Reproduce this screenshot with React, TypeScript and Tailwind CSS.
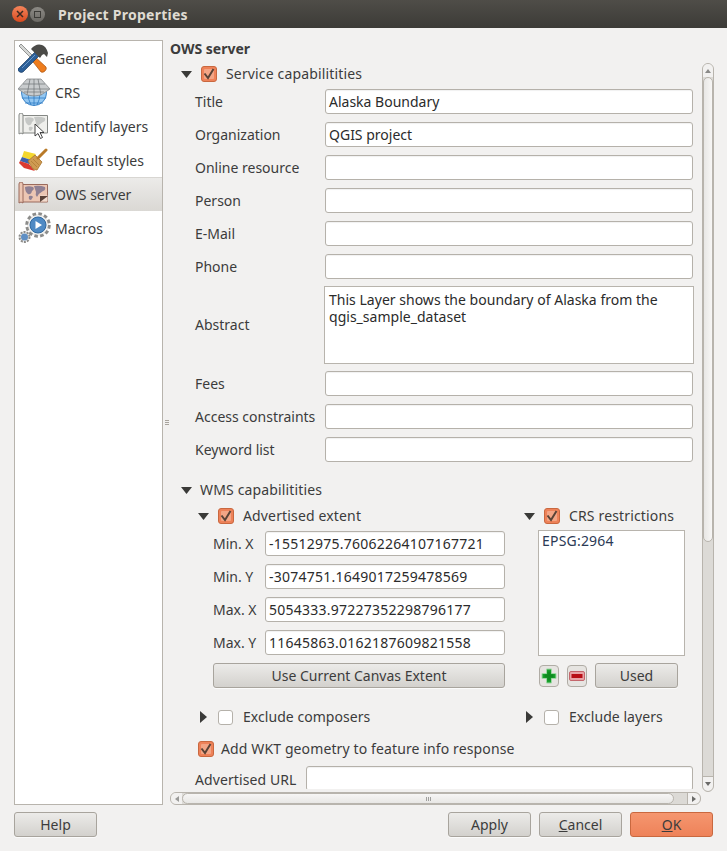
import type { ReactNode } from 'react';

const inputCls = 'h-[25px] rounded-[3px] border border-[#b5b1aa] bg-white px-[3px] text-[14px] leading-[23px] text-[#2b2b2b] shadow-[inset_0_1px_1px_rgba(0,0,0,0.06)]';
const btnCls = 'flex h-[25px] items-center justify-center rounded-[3px] border border-[#a8a49d] bg-gradient-to-b from-[#ecebe9] to-[#d3d1cd] text-[14px] text-[#3c3c3c] shadow-[0_1px_0_rgba(255,255,255,0.7)]';

function Triangle({ dir = 'down' }: { dir?: 'down' | 'right' }) {
  return (
    <svg width="11" height="12" viewBox="0 0 11 12" className="shrink-0">
      {dir === 'down' ? <path d="M0 3h11L5.500 10z" fill="#3a3a38" /> : <path d="M2 0v12l7-6z" fill="#3a3a38" />}
    </svg>
  );
}

function Check({ checked = true }: { checked?: boolean }) {
  if (!checked) {
    return <div className="mr-[1px] h-[15px] w-[15px] shrink-0 rounded-[3px] border border-[#b5b1aa] bg-white" />;
  }
  return (
    <svg width="16" height="16" viewBox="0 0 16 16" className="shrink-0">
      <rect x="0.500" y="0.500" width="15" height="15" rx="2.500" fill="#ee8259" stroke="#c9683f" />
      <rect x="3" y="3" width="10" height="10" rx="1" fill="#f3a585" />
      <path d="M3.500 7.500l3.500 4.500 5.500-9" fill="none" stroke="#5a4336" strokeWidth="2" />
    </svg>
  );
}

// labels sit a pixel higher next to checkboxes than the font's own centre
function RowLabel({ children }: { children: ReactNode }) {
  return <span className="-mt-[2px] whitespace-nowrap tracking-[0.15px]">{children}</span>;
}

function GeneralIcon() {
  return (
    <svg width="30" height="30" viewBox="0 0 30 30">
      <path d="M1 3l2-2 12 12-2 2z" fill="#d4d6d4" stroke="#6f6f6f" strokeWidth="0.7" />
      <path d="M12 15l3-3 13 12q1 2-1 4t-4 1z" fill="#ee7d1e" stroke="#a8500c" strokeWidth="0.7" />
      <path d="M0 26L17 9l4 4L5 29q-2 1-4-.5t-1-2.500z" fill="#2c5f98" stroke="#1c3d63" strokeWidth="0.7" />
      <path d="M4 25L17 12" stroke="#6f9bc9" strokeWidth="1" />
      <path d="M13 6q5-6 11-4 4 1 6 8l-1 4-3-3-2 1-2 3-5-5-1-1z" fill="#4b4b48" />
    </svg>
  );
}

function CrsIcon() {
  return (
    <svg width="32" height="28" viewBox="0 0 32 28">
      <circle cx="16" cy="15" r="12.500" fill="#93c7f2" stroke="#3f86c9" />
      <path d="M16 14v14M4 20h24M7 25h18M10 14q0 8 3 13M22 14q0 8-3 13" stroke="#2f7cc4" strokeWidth="0.8" fill="none" />
      <path d="M0 11L9 1h14l9 10-9 6-7 1-7-1z" fill="#c9ccce" stroke="#85898c" strokeWidth="0.8" />
      <path d="M16 1v17M12 1L9 17M20 1l3 16M5 6h22M1 11h30M6 14h20" stroke="#6f7376" strokeWidth="0.7" fill="none" />
    </svg>
  );
}

function MapIcon({ active = false, cursor = false }: { active?: boolean; cursor?: boolean }) {
  const stroke = active ? '#9a6a5c' : '#858885';
  const paper = active ? '#ecc6b3' : '#efefec';
  const land = active ? '#8f8093' : '#c6c8c6';
  return (
    <svg width="32" height="26" viewBox="0 0 32 26">
      <path d="M4 2.500h25.500v17.500H4z" fill={paper} stroke={stroke} />
      <path d="M1 2q0-2 2-2t2 2v19q-2-2-4 0z" fill={paper} stroke={stroke} />
      <path d="M7 5q4-1.500 8 0 2 2-1 4-1 4-4 3-3-2-3-7z" fill={land} />
      <path d="M16 4q6-1 11 1 1 3-2 4-4 2-6 6-2-2-1-5z" fill={land} />
      <path d="M11 14q3-1 4 1l-2 3q-3 0-2-4z" fill={land} />
      {active && <path d="M22.500 19.500v-6l7 0v6z" fill="#f3dccf" />}
      {active && <path d="M22 20v-6h8z" fill="#5b4238" />}
      {cursor && <path d="M17 11v12l3-2.500 2.500 5 2-1-2.500-5h4z" fill="#fff" stroke="#333" strokeWidth="0.9" />}
    </svg>
  );
}

function BrushIcon() {
  return (
    <svg width="30" height="26" viewBox="0 0 30 26">
      <path d="M6 4l12 3-5 6-9-3z" fill="#f4d72f" />
      <path d="M4 10l9 3-2 4-9-3z" fill="#3d62ad" />
      <path d="M2 14l9 3 6 7-11-3-5-5z" fill="#dc3a30" />
      <path d="M10 14l7-6 7 7-5 8-4-1z" fill="#cf9b52" stroke="#a6722c" strokeWidth="0.8" />
      <path d="M13 14l6 6M15 12l6 6" stroke="#a6722c" strokeWidth="0.6" />
      <path d="M20 11l8-8" stroke="#b97a28" strokeWidth="3" strokeLinecap="round" />
    </svg>
  );
}

function MacrosIcon() {
  return (
    <svg width="33" height="32" viewBox="0 0 33 32">
      <circle cx="20" cy="13" r="11" fill="#ecebe9" stroke="#8c8c8a" strokeWidth="3.500" strokeDasharray="3.500 2.260" />
      <circle cx="20" cy="13" r="10" fill="#f1f0ee" />
      <circle cx="20" cy="13" r="8" fill="#4f8ac4" stroke="#2f689f" />
      <path d="M17.500 9v8l6.500-4z" fill="#fff" />
      <circle cx="6.500" cy="25" r="5" fill="#ecebe9" stroke="#8c8c8a" strokeWidth="2" strokeDasharray="2 1.140" />
      <circle cx="6.500" cy="25" r="3.500" fill="#5f8fc4" />
    </svg>
  );
}

const navItems: { label: string; icon: ReactNode; active?: boolean }[] = [
  { label: 'General', icon: <GeneralIcon /> },
  { label: 'CRS', icon: <CrsIcon /> },
  { label: 'Identify layers', icon: <MapIcon cursor /> },
  { label: 'Default styles', icon: <BrushIcon /> },
  { label: 'OWS server', icon: <MapIcon active />, active: true },
  { label: 'Macros', icon: <MacrosIcon /> },
];

function Sidebar() {
  return (
    <div className="w-[149px] shrink-0 border border-[#b8b4ad] bg-white">
      {navItems.map((item) => (
        <div
          key={item.label}
          className={
            item.active
              ? 'flex h-[34px] items-center border-t border-[#d8d6d2] bg-gradient-to-b from-[#ecebe9] to-[#dad8d4]'
              : 'flex h-[34px] items-center'
          }
        >
          <div className="flex w-[40px] shrink-0 items-center justify-start pl-[3px]">{item.icon}</div>
          <span className="text-[14px] text-[#3c3c3c]">{item.label}</span>
        </div>
      ))}
    </div>
  );
}

function FormRow({ label, value }: { label: string; value?: string }) {
  return (
    <div className="flex h-[25px] items-center">
      <span className="w-[130px] shrink-0 text-[14px] text-[#3c3c3c]">{label}</span>
      <div className={`${inputCls} w-[368px]`}>{value}</div>
    </div>
  );
}

function ExtentRow({ label, value }: { label: string; value: string }) {
  return (
    <div className="flex h-[25px] items-center">
      <span className="w-[52px] shrink-0 text-[14px] text-[#3c3c3c]">{label}</span>
      <div className={`${inputCls} w-[240px] whitespace-nowrap tracking-[0.24px]`}>{value}</div>
    </div>
  );
}

function VerticalScrollbar() {
  return (
    <div className="flex h-[729px] w-[12px] shrink-0 flex-col overflow-hidden rounded-[6px] border border-[#b8b4ad] bg-[#dcdad6]">
      <div className="flex h-[13px] shrink-0 items-center justify-center bg-[#f2f1f0]">
        <svg width="6" height="4" viewBox="0 0 6 4"><path d="M0 4h6L3 0z" fill="#8a8a88" /></svg>
      </div>
      <div className="h-[465px] shrink-0 rounded-[6px] border border-[#b8b4ad] bg-gradient-to-r from-[#e8e7e5] to-[#f7f6f5]" />
      <div className="flex-1" />
      <div className="flex h-[15px] shrink-0 items-center justify-center rounded-b-[6px] border-t border-[#b8b4ad] bg-[#f2f1f0]">
        <svg width="6" height="4" viewBox="0 0 6 4"><path d="M0 0h6L3 4z" fill="#6a6a68" /></svg>
      </div>
    </div>
  );
}

function HorizontalScrollbar() {
  return (
    <div className="flex h-[13px] w-[531px] shrink-0 overflow-hidden rounded-[6px] border border-[#b8b4ad] bg-[#dcdad6]">
      <div className="flex w-[11px] shrink-0 items-center justify-center bg-[#f2f1f0]">
        <svg width="4" height="6" viewBox="0 0 4 6"><path d="M4 0v6L0 3z" fill="#9a9a98" /></svg>
      </div>
      <div className="flex w-[492px] shrink-0 items-center justify-center gap-[1px] rounded-[6px] border border-[#b8b4ad] bg-gradient-to-b from-[#f7f6f5] to-[#e8e7e5]">
        <span className="h-[4px] w-px bg-[#a0a09e]" />
        <span className="h-[4px] w-px bg-[#a0a09e]" />
        <span className="h-[4px] w-px bg-[#a0a09e]" />
      </div>
      <div className="flex-1" />
      <div className="flex w-[13px] shrink-0 items-center justify-center rounded-r-[6px] border-l border-[#b8b4ad] bg-[#f2f1f0]">
        <svg width="4" height="6" viewBox="0 0 4 6"><path d="M0 0v6l4-3z" fill="#6a6a68" /></svg>
      </div>
    </div>
  );
}

function ScrollContent() {
  return (
    <div className="mr-[1px] h-[726px] w-[531px] shrink-0 overflow-hidden text-[14px] text-[#3c3c3c]">
      <div className="flex h-[22px] items-center gap-[9px] pl-[11px]">
        <Triangle />
        <Check />
        <RowLabel>Service capabilitities</RowLabel>
      </div>

      <div className="mt-[4px] flex flex-col gap-[8px] pl-[25px]">
        <FormRow label="Title" value="Alaska Boundary" />
        <FormRow label="Organization" value="QGIS project" />
        <FormRow label="Online resource" />
        <FormRow label="Person" />
        <FormRow label="E-Mail" />
        <FormRow label="Phone" />
      </div>
      <div className="mt-[7px] flex h-[78px] items-center pl-[25px]">
        <span className="-mt-[2px] w-[129px] shrink-0">Abstract</span>
        <div className="h-[78px] w-[370px] border border-[#b8b4ad] bg-white px-[4px] pt-[4px] leading-[17px] tracking-[0.02px] text-[#2b2b2b]">
          This Layer shows the boundary of Alaska from the qgis_sample_dataset
        </div>
      </div>
      <div className="mt-[7px] flex flex-col gap-[8px] pl-[25px]">
        <FormRow label="Fees" />
        <FormRow label="Access constraints" />
        <FormRow label="Keyword list" />
      </div>

      <div className="mt-[17px] flex h-[22px] items-center gap-[8px] pl-[11px]">
        <Triangle />
        <RowLabel>WMS capabilitities</RowLabel>
      </div>

      <div className="mt-[4px] flex">
        <div className="w-[335px] shrink-0 pl-[28px]">
          <div className="flex h-[22px] items-center gap-[9px]">
            <Triangle />
            <Check />
            <RowLabel>Advertised extent</RowLabel>
          </div>
          <div className="ml-[15px] mt-[4px] flex flex-col gap-[8px]">
            <ExtentRow label="Min. X" value="-15512975.76062264107167721" />
            <ExtentRow label="Min. Y" value="-3074751.1649017259478569" />
            <ExtentRow label="Max. X" value="5054333.97227352298796177" />
            <ExtentRow label="Max. Y" value="11645863.0162187609821558" />
            <div className={`${btnCls} w-[292px]`}>Use Current Canvas Extent</div>
          </div>
        </div>
        <div className="w-[190px] shrink-0 pl-[19px]">
          <div className="flex h-[22px] items-center gap-[9px]">
            <Triangle />
            <Check />
            <RowLabel>CRS restrictions</RowLabel>
          </div>
          <div className="ml-[14px] mt-[3px] h-[126px] w-[147px] border border-[#b8b4ad] bg-white px-[3px] leading-[19px] tracking-[0.2px] text-[#2b3a55]">EPSG:2964</div>
          <div className="ml-[15px] mt-[7px] flex h-[25px] items-center">
            <div className="flex h-[22px] w-[20px] items-center justify-center rounded-[4px] border border-[#b0aca5] bg-[#e6e4e1]">
              <svg width="16" height="16" viewBox="0 0 16 16">
                <path d="M5.500 1h5v4.500H15v5h-4.500V15h-5v-4.500H1v-5h4.500z" fill="#18a02c" stroke="#9fd8a4" />
                <path d="M6.500 3.500h3v3h3v3h-3v3h-3v-3h-3v-3h3z" fill="#0f8a20" />
              </svg>
            </div>
            <div className="ml-[8px] flex h-[22px] w-[20px] items-center justify-center rounded-[4px] border border-[#b0aca5] bg-[#e6e4e1]">
              <svg width="16" height="10" viewBox="0 0 16 10">
                <rect x="0.500" y="0.500" width="15" height="9" rx="1.500" fill="#e8a3a6" stroke="#c4666c" />
                <rect x="2.500" y="3" width="11" height="4" fill="#b80f16" />
              </svg>
            </div>
            <div className={`${btnCls} ml-[8px] w-[83px]`}>Used</div>
          </div>
        </div>
      </div>

      <div className="mt-[18px] flex h-[22px] items-center">
        <div className="flex w-[335px] shrink-0 items-center gap-[9px] pl-[28px]">
          <Triangle dir="right" />
          <Check checked={false} />
          <span className="-mt-[2px] whitespace-nowrap tracking-[0.05px]">Exclude composers</span>
        </div>
        <div className="flex items-center gap-[9px] pl-[19px]">
          <Triangle dir="right" />
          <Check checked={false} />
          <span className="-mt-[2px] whitespace-nowrap tracking-[0.05px]">Exclude layers</span>
        </div>
      </div>

      <div className="mt-[10px] flex h-[22px] items-center gap-[7px] pl-[28px]">
        <Check />
        <span className="-mt-[2px] whitespace-nowrap tracking-[0.12px]">Add WKT geometry to feature info response</span>
      </div>

      <div className="mt-[6px] flex items-start pl-[25px]">
        <span className="mt-[3px] w-[111px] shrink-0 whitespace-nowrap tracking-[0.1px]">Advertised URL</span>
        <div className={`${inputCls} w-[387px]`} />
      </div>
    </div>
  );
}

function FooterButton({ children, primary = false, className = '' }: { children: ReactNode; primary?: boolean; className?: string }) {
  return (
    <div
      className={
        primary
          ? `flex h-[25px] w-[83px] items-center justify-center rounded-[3px] border border-[#c9683f] bg-gradient-to-b from-[#f5966f] to-[#ee8259] text-[14px] text-[#3c3c3c] ${className}`
          : `${btnCls} w-[83px] ${className}`
      }
    >
      {children}
    </div>
  );
}

export default function App() {
  return (
    <div className="flex h-[851px] w-[727px] flex-col overflow-hidden bg-[#f2f1f0] font-['Noto_Sans','Open_Sans',sans-serif]">
      <div className="flex h-[28px] shrink-0 items-center bg-gradient-to-b from-[#4f4d48] to-[#3c3b37] pl-[12px]">
        <div className="flex h-[16px] w-[16px] items-center justify-center rounded-full bg-gradient-to-b from-[#f4845a] to-[#d8491c]">
          <svg width="8" height="8" viewBox="0 0 8 8"><path d="M1 1l6 6M7 1L1 7" stroke="#3c2a22" strokeWidth="1.500" /></svg>
        </div>
        <div className="ml-[2px] flex h-[15px] w-[15px] items-center justify-center rounded-full bg-gradient-to-b from-[#8c8a85] to-[#6c6a65]">
          <div className="h-[7px] w-[7px] border border-[#3c3b37]" />
        </div>
        <span className="ml-[13px] text-[14px] font-bold tracking-[0.24px] text-[#dfdbd2]">Project Properties</span>
      </div>

      <div className="mt-[12px] flex h-[765px] shrink-0 pl-[14px]">
        <Sidebar />
        <div className="flex w-[7px] shrink-0 flex-col items-center justify-center gap-[1px]">
          <span className="h-[1px] w-[4px] bg-[#a8a49d]" />
          <span className="h-[1px] w-[4px] bg-[#a8a49d]" />
          <span className="h-[1px] w-[4px] bg-[#a8a49d]" />
        </div>
        <div className="flex flex-col">
          <div className="h-[23px] shrink-0 text-[14px] font-bold leading-[18px] text-[#3c3c3c]">OWS server</div>
          <div className="flex">
            <ScrollContent />
            <VerticalScrollbar />
          </div>
          <HorizontalScrollbar />
        </div>
      </div>

      <div className="mt-[7px] flex h-[25px] shrink-0 pl-[14px]">
        <FooterButton>Help</FooterButton>
        <FooterButton className="ml-[351px]">Apply</FooterButton>
        <FooterButton className="ml-[8px]"><span><span className="underline">C</span>ancel</span></FooterButton>
        <FooterButton primary className="ml-[8px]"><span><span className="underline">O</span>K</span></FooterButton>
      </div>
    </div>
  );
}
